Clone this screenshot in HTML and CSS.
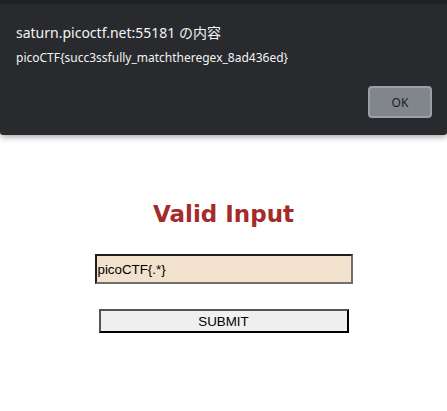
FILE: index.html
```html
<!DOCTYPE html>
<html lang="ja">
<head>
<meta charset="utf-8">
<title>Regex</title>
<link rel="stylesheet" href="styles.css">
</head>
<body>
<main class="page">
  <h1 class="title">Valid Input</h1>
  <form class="form">
    <input class="field" type="text" value="picoCTF{.*}">
    <button class="submit" type="button">SUBMIT</button>
  </form>
</main>
<div class="dialog" role="alertdialog">
  <div class="dialog-title">saturn.picoctf.net:55181 の内容</div>
  <div class="dialog-msg">picoCTF{succ3ssfully_matchtheregex_8ad436ed}</div>
  <div class="dialog-actions">
    <button class="ok" type="button">OK</button>
  </div>
</div>
</body>
</html>
```

FILE: styles.css
```css
html, body {
  margin: 0;
  padding: 0;
  background: #ffffff;
}
body {
  width: 447px;
  height: 411px;
  overflow: hidden;
  position: relative;
}
.page {
  display: flex;
  flex-direction: column;
  align-items: center;
  padding-top: 199px;
}
.title {
  margin: 0;
  font-family: "DejaVu Sans", Verdana, sans-serif;
  font-weight: bold;
  font-size: 23px;
  line-height: 30px;
  color: #a52a2a;
}
.form {
  display: flex;
  flex-direction: column;
  align-items: center;
  margin-top: 25px;
}
.field {
  box-sizing: border-box;
  width: 258px;
  height: 30px;
  margin: 0;
  padding: 0 1px;
  border-width: 2px;
  border-style: solid;
  border-color: #1e1e1e #6f6f6f #6f6f6f #1e1e1e;
  background: #f2e2cd;
  font-family: "Liberation Sans", Arial, sans-serif;
  font-size: 13.33px;
  color: #000;
  outline: none;
}
.submit {
  box-sizing: border-box;
  width: 250px;
  height: 24px;
  margin-top: 25px;
  padding: 0;
  border-width: 2px;
  border-style: solid;
  border-color: #555555 #000000 #000000 #555555;
  background: #efefef;
  font-family: "Liberation Sans", Arial, sans-serif;
  font-size: 13.33px;
  color: #000;
}
.dialog {
  position: absolute;
  top: 0;
  left: 0;
  right: 0;
  height: 135px;
  box-sizing: border-box;
  border-top: 4px solid #202124;
  background: #292a2d;
  border-radius: 0 0 3px 3px;
  box-shadow: 0 2px 6px rgba(0, 0, 0, 0.35);
  padding: 19px 16px 0 16px;
  font-family: "Noto Sans", "Noto Sans CJK JP", sans-serif;
  color: #f1f3f4;
}
.dialog-title {
  font-size: 14px;
  line-height: 20px;
}
.dialog-msg {
  margin-top: 7px;
  font-size: 12px;
  line-height: 16px;
}
.dialog-actions {
  display: flex;
  justify-content: flex-end;
  margin-top: 20px;
}
.ok {
  box-sizing: border-box;
  width: 64px;
  height: 32px;
  margin-right: -1px;
  border: 2px solid #9aa0a6;
  border-radius: 4px;
  background: #80868b;
  color: #202124;
  font-family: "Noto Sans", sans-serif;
  font-size: 12px;
  padding: 0;
}
```
